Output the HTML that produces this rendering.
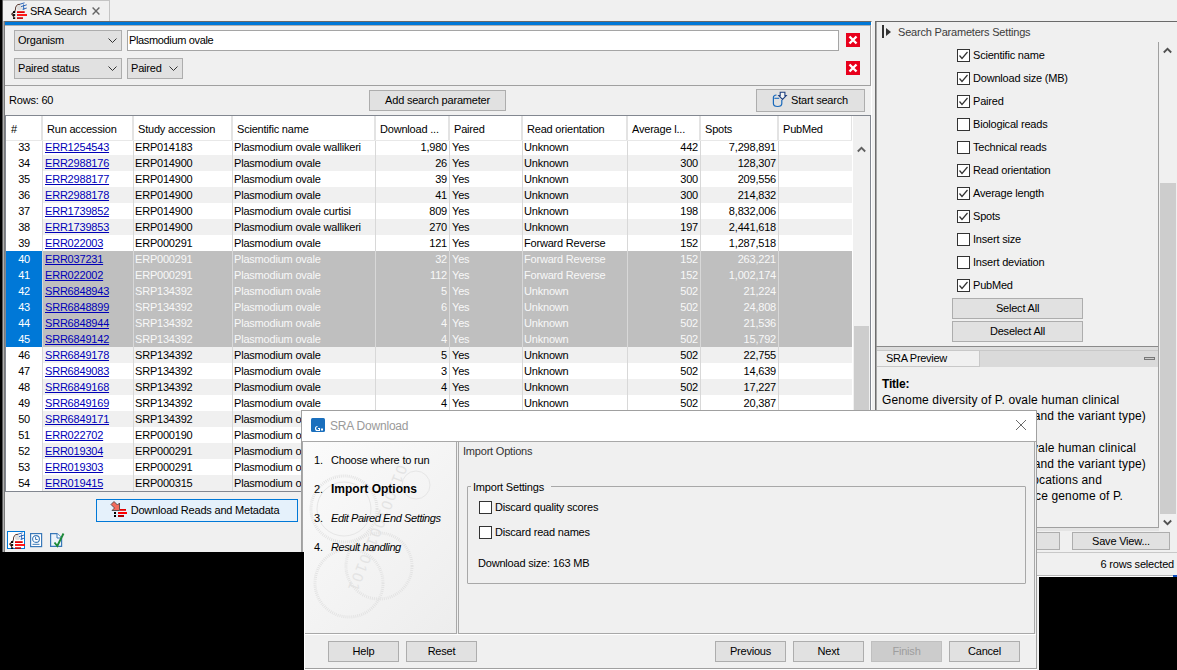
<!DOCTYPE html>
<html><head><meta charset="utf-8"><title>SRA Search</title>
<style>
*{margin:0;padding:0;box-sizing:border-box}
html,body{width:1177px;height:670px;overflow:hidden;background:#f0f0f0}
body{position:relative;font-family:"Liberation Sans",sans-serif;font-size:11px;color:#000}
.a{position:absolute}
.t{position:absolute;white-space:nowrap;line-height:16px;font-size:11px;letter-spacing:-0.2px}
.btn{letter-spacing:-0.2px}
.btn{position:absolute;background:#e1e1e1;border:1px solid #adadad;text-align:center;line-height:18px;white-space:nowrap}
.cb{position:absolute;width:13px;height:13px;border:1px solid #333;background:#fff}
.row{position:absolute;left:6px;width:846px;height:16px}
.lnk{color:#0000b8;text-decoration:underline}
.r{text-align:right}
</style></head><body>

<div class="a" style="left:0;top:0;width:2px;height:670px;background:#000"></div>
<div class="a" style="left:2px;top:0;width:1px;height:670px;background:#5a5a5a"></div>
<div class="a" style="left:3px;top:21px;width:1px;height:531px;background:#b0b0b0"></div>
<div class="a" style="left:3px;top:0;width:107px;height:21px;background:#f0f0f0;border-top:1px solid #c4c4c4;border-right:1px solid #c4c4c4"></div>
<svg class="a" style="left:10px;top:2px" width="18" height="18" viewBox="0 0 18 18">
<circle cx="9.5" cy="5.5" r="2.6" fill="#dedede"/>
<path d="M5.3 8.6 Q5 4.5 7.5 2.6 L10 2.3" stroke="#5a3a30" stroke-width="1" fill="none"/>
<path d="M5.3 8.6 L1.8 12 L4 15" stroke="#4a2a20" stroke-width="1.2" fill="none"/>
<rect x="3" y="9.2" width="2.2" height="1.8" fill="#000"/><rect x="3" y="12.1" width="2.2" height="1.8" fill="#000"/><rect x="3" y="15.3" width="2.2" height="1.6" fill="#000"/>
<path d="M10 2.2 L14.5 0.8 M11 4.6 L16.8 2.8 M12.5 7.2 L16.8 6 M13.5 2.5 L13.8 8" stroke="#3068b8" stroke-width="1" fill="none"/>
<rect x="7" y="9.2" width="7.7" height="1.8" fill="#e00000"/><rect x="7" y="12.1" width="10" height="1.8" fill="#ff0000"/><rect x="7" y="15.3" width="6" height="1.6" fill="#c00000"/>
</svg>
<div class="t" style="left:30px;top:3px;font-size:11px;letter-spacing:-0.35px;color:#000">SRA Search</div>
<svg class="a" style="left:92px;top:7px" width="8" height="8" viewBox="0 0 8 8"><path d="M0.6 0.6 L7.4 7.4 M7.4 0.6 L0.6 7.4" stroke="#666" stroke-width="1.4"/></svg>
<div class="a" style="left:4px;top:21px;width:868px;height:532px;border-left:1px solid #7a7a7a;border-top:1px solid #6a6a6a;border-right:1px solid #ffffff"></div>
<div class="a" style="left:5px;top:22px;width:866px;height:3px;background:#0078d7"></div>
<div class="a" style="left:5px;top:25px;width:866px;height:1px;background:#b0b0b0"></div>
<div class="a" style="left:5px;top:85px;width:866px;height:1px;background:#a0a0a0"></div>
<div class="a" style="left:870px;top:25px;width:1px;height:61px;background:#a0a0a0"></div>
<div class="a" style="left:14px;top:30px;width:108px;height:21px;background:#e1e1e1;border:1px solid #adadad"></div>
<div class="t" style="left:18px;top:32px">Organism</div>
<svg class="a" style="left:108px;top:38px" width="9" height="6" viewBox="0 0 9 6"><path d="M0.5 0.5 L4.5 4.5 L8.5 0.5" stroke="#333" stroke-width="1" fill="none"/></svg>
<div class="a" style="left:127px;top:30px;width:712px;height:21px;background:#fff;border:1px solid #a5a5a5"></div>
<div class="t" style="left:129px;top:32px;letter-spacing:-0.35px">Plasmodium ovale</div>
<div class="a" style="left:14px;top:58px;width:108px;height:21px;background:#e1e1e1;border:1px solid #adadad"></div>
<div class="t" style="left:18px;top:60px">Paired status</div>
<svg class="a" style="left:108px;top:66px" width="9" height="6" viewBox="0 0 9 6"><path d="M0.5 0.5 L4.5 4.5 L8.5 0.5" stroke="#333" stroke-width="1" fill="none"/></svg>
<div class="a" style="left:127px;top:58px;width:56px;height:21px;background:#e1e1e1;border:1px solid #adadad"></div>
<div class="t" style="left:131px;top:60px">Paired</div>
<svg class="a" style="left:169px;top:66px" width="9" height="6" viewBox="0 0 9 6"><path d="M0.5 0.5 L4.5 4.5 L8.5 0.5" stroke="#333" stroke-width="1" fill="none"/></svg>
<svg class="a" style="left:846px;top:33px" width="14" height="14" viewBox="0 0 14 14"><rect width="14" height="14" fill="#e8001c"/><path d="M3.5 3.5 L10.5 10.5 M10.5 3.5 L3.5 10.5" stroke="#fff" stroke-width="2.4"/></svg>
<svg class="a" style="left:846px;top:61px" width="14" height="14" viewBox="0 0 14 14"><rect width="14" height="14" fill="#e8001c"/><path d="M3.5 3.5 L10.5 10.5 M10.5 3.5 L3.5 10.5" stroke="#fff" stroke-width="2.4"/></svg>
<div class="t" style="left:9px;top:92px">Rows: 60</div>
<div class="btn" style="left:369px;top:90px;width:137px;height:21px">Add search parameter</div>
<div class="btn" style="left:756px;top:89px;width:109px;height:23px;line-height:20px;padding-left:18px">Start search</div>
<svg class="a" style="left:771px;top:90px" width="18" height="18" viewBox="0 0 18 18">
<path d="M5.5 5 Q2.4 5.2 2.4 7.5 L2.4 13.5 Q2.4 16.5 6.6 16.5 Q10.8 16.5 10.8 13.5 L10.8 10" fill="none" stroke="#1a6abc" stroke-width="1.2"/>
<path d="M3.3 8.3 L8.2 8.3" stroke="#1a6abc" stroke-width="1.1"/>
<path d="M9.2 2.3 L13.9 2.3 L13.9 5.6 L15.2 5.6 L11.5 9.4 L7.8 5.6 L9.2 5.6 Z" fill="#f4f4f4" stroke="#1d3f7f" stroke-width="1.1"/>
</svg>
<div class="a" style="left:5px;top:115px;width:866px;height:377px;background:#fff;border:1px solid #828790"></div>
<div class="a" style="left:6px;top:116px;width:846px;height:25px;background:#fff;border-bottom:1px solid #e8e8e8"></div>
<div class="t" style="left:11px;top:121px">#</div>
<div class="t" style="left:47px;top:121px">Run accession</div>
<div class="t" style="left:138px;top:121px">Study accession</div>
<div class="t" style="left:237px;top:121px">Scientific name</div>
<div class="t" style="left:380px;top:121px">Download ...</div>
<div class="t" style="left:454px;top:121px">Paired</div>
<div class="t" style="left:527px;top:121px">Read orientation</div>
<div class="t" style="left:632px;top:121px">Average l...</div>
<div class="t" style="left:705px;top:121px">Spots</div>
<div class="t" style="left:783px;top:121px">PubMed</div>
<div class="a" style="left:41px;top:116px;width:2px;height:24px;background:#e3e3e3"></div>
<div class="a" style="left:132px;top:116px;width:2px;height:24px;background:#e3e3e3"></div>
<div class="a" style="left:231px;top:116px;width:2px;height:24px;background:#e3e3e3"></div>
<div class="a" style="left:374px;top:116px;width:2px;height:24px;background:#e3e3e3"></div>
<div class="a" style="left:448px;top:116px;width:2px;height:24px;background:#e3e3e3"></div>
<div class="a" style="left:521px;top:116px;width:2px;height:24px;background:#e3e3e3"></div>
<div class="a" style="left:626px;top:116px;width:2px;height:24px;background:#e3e3e3"></div>
<div class="a" style="left:699px;top:116px;width:2px;height:24px;background:#e3e3e3"></div>
<div class="a" style="left:777px;top:116px;width:2px;height:24px;background:#e3e3e3"></div>
<div class="a" style="left:851px;top:116px;width:2px;height:24px;background:#e3e3e3"></div>
<div class="row" style="top:141px;height:14px;background:#ffffff"></div>
<div class="a" style="left:6px;top:141px;width:36px;height:14px;background:#fff"></div>
<div class="t r" style="left:6px;width:24px;top:139px;color:#000">33</div>
<div class="t lnk" style="left:45px;top:139px">ERR1254543</div>
<div class="t" style="left:135px;top:139px;color:#000">ERP014183</div>
<div class="t" style="left:234px;top:139px;color:#000">Plasmodium ovale wallikeri</div>
<div class="t r" style="left:375px;width:72px;top:139px;color:#000">1,980</div>
<div class="t" style="left:452px;top:139px;color:#000">Yes</div>
<div class="t" style="left:524px;top:139px;color:#000">Unknown</div>
<div class="t r" style="left:627px;width:71px;top:139px;color:#000">442</div>
<div class="t r" style="left:700px;width:76px;top:139px;color:#000">7,298,891</div>
<div class="row" style="top:155px;background:#f0f0f0"></div>
<div class="a" style="left:6px;top:155px;width:36px;height:16px;background:#fff"></div>
<div class="t r" style="left:6px;width:24px;top:155px;color:#000">34</div>
<div class="t lnk" style="left:45px;top:155px">ERR2988176</div>
<div class="t" style="left:135px;top:155px;color:#000">ERP014900</div>
<div class="t" style="left:234px;top:155px;color:#000">Plasmodium ovale</div>
<div class="t r" style="left:375px;width:72px;top:155px;color:#000">26</div>
<div class="t" style="left:452px;top:155px;color:#000">Yes</div>
<div class="t" style="left:524px;top:155px;color:#000">Unknown</div>
<div class="t r" style="left:627px;width:71px;top:155px;color:#000">300</div>
<div class="t r" style="left:700px;width:76px;top:155px;color:#000">128,307</div>
<div class="row" style="top:171px;background:#ffffff"></div>
<div class="a" style="left:6px;top:171px;width:36px;height:16px;background:#fff"></div>
<div class="t r" style="left:6px;width:24px;top:171px;color:#000">35</div>
<div class="t lnk" style="left:45px;top:171px">ERR2988177</div>
<div class="t" style="left:135px;top:171px;color:#000">ERP014900</div>
<div class="t" style="left:234px;top:171px;color:#000">Plasmodium ovale</div>
<div class="t r" style="left:375px;width:72px;top:171px;color:#000">39</div>
<div class="t" style="left:452px;top:171px;color:#000">Yes</div>
<div class="t" style="left:524px;top:171px;color:#000">Unknown</div>
<div class="t r" style="left:627px;width:71px;top:171px;color:#000">300</div>
<div class="t r" style="left:700px;width:76px;top:171px;color:#000">209,556</div>
<div class="row" style="top:187px;background:#f0f0f0"></div>
<div class="a" style="left:6px;top:187px;width:36px;height:16px;background:#fff"></div>
<div class="t r" style="left:6px;width:24px;top:187px;color:#000">36</div>
<div class="t lnk" style="left:45px;top:187px">ERR2988178</div>
<div class="t" style="left:135px;top:187px;color:#000">ERP014900</div>
<div class="t" style="left:234px;top:187px;color:#000">Plasmodium ovale</div>
<div class="t r" style="left:375px;width:72px;top:187px;color:#000">41</div>
<div class="t" style="left:452px;top:187px;color:#000">Yes</div>
<div class="t" style="left:524px;top:187px;color:#000">Unknown</div>
<div class="t r" style="left:627px;width:71px;top:187px;color:#000">300</div>
<div class="t r" style="left:700px;width:76px;top:187px;color:#000">214,832</div>
<div class="row" style="top:203px;background:#ffffff"></div>
<div class="a" style="left:6px;top:203px;width:36px;height:16px;background:#fff"></div>
<div class="t r" style="left:6px;width:24px;top:203px;color:#000">37</div>
<div class="t lnk" style="left:45px;top:203px">ERR1739852</div>
<div class="t" style="left:135px;top:203px;color:#000">ERP014900</div>
<div class="t" style="left:234px;top:203px;color:#000">Plasmodium ovale curtisi</div>
<div class="t r" style="left:375px;width:72px;top:203px;color:#000">809</div>
<div class="t" style="left:452px;top:203px;color:#000">Yes</div>
<div class="t" style="left:524px;top:203px;color:#000">Unknown</div>
<div class="t r" style="left:627px;width:71px;top:203px;color:#000">198</div>
<div class="t r" style="left:700px;width:76px;top:203px;color:#000">8,832,006</div>
<div class="row" style="top:219px;background:#f0f0f0"></div>
<div class="a" style="left:6px;top:219px;width:36px;height:16px;background:#fff"></div>
<div class="t r" style="left:6px;width:24px;top:219px;color:#000">38</div>
<div class="t lnk" style="left:45px;top:219px">ERR1739853</div>
<div class="t" style="left:135px;top:219px;color:#000">ERP014900</div>
<div class="t" style="left:234px;top:219px;color:#000">Plasmodium ovale wallikeri</div>
<div class="t r" style="left:375px;width:72px;top:219px;color:#000">270</div>
<div class="t" style="left:452px;top:219px;color:#000">Yes</div>
<div class="t" style="left:524px;top:219px;color:#000">Unknown</div>
<div class="t r" style="left:627px;width:71px;top:219px;color:#000">197</div>
<div class="t r" style="left:700px;width:76px;top:219px;color:#000">2,441,618</div>
<div class="row" style="top:235px;background:#ffffff"></div>
<div class="a" style="left:6px;top:235px;width:36px;height:16px;background:#fff"></div>
<div class="t r" style="left:6px;width:24px;top:235px;color:#000">39</div>
<div class="t lnk" style="left:45px;top:235px">ERR022003</div>
<div class="t" style="left:135px;top:235px;color:#000">ERP000291</div>
<div class="t" style="left:234px;top:235px;color:#000">Plasmodium ovale</div>
<div class="t r" style="left:375px;width:72px;top:235px;color:#000">121</div>
<div class="t" style="left:452px;top:235px;color:#000">Yes</div>
<div class="t" style="left:524px;top:235px;color:#000">Forward Reverse</div>
<div class="t r" style="left:627px;width:71px;top:235px;color:#000">152</div>
<div class="t r" style="left:700px;width:76px;top:235px;color:#000">1,287,518</div>
<div class="row" style="top:251px;background:#bfbfbf"></div>
<div class="a" style="left:6px;top:251px;width:36px;height:16px;background:#0078d7"></div>
<div class="t r" style="left:6px;width:24px;top:251px;color:#fff">40</div>
<div class="t lnk" style="left:45px;top:251px">ERR037231</div>
<div class="t" style="left:135px;top:251px;color:#f8f8f8">ERP000291</div>
<div class="t" style="left:234px;top:251px;color:#f8f8f8">Plasmodium ovale</div>
<div class="t r" style="left:375px;width:72px;top:251px;color:#f8f8f8">32</div>
<div class="t" style="left:452px;top:251px;color:#f8f8f8">Yes</div>
<div class="t" style="left:524px;top:251px;color:#f8f8f8">Forward Reverse</div>
<div class="t r" style="left:627px;width:71px;top:251px;color:#f8f8f8">152</div>
<div class="t r" style="left:700px;width:76px;top:251px;color:#f8f8f8">263,221</div>
<div class="row" style="top:267px;background:#bfbfbf"></div>
<div class="a" style="left:6px;top:267px;width:36px;height:16px;background:#0078d7"></div>
<div class="t r" style="left:6px;width:24px;top:267px;color:#fff">41</div>
<div class="t lnk" style="left:45px;top:267px">ERR022002</div>
<div class="t" style="left:135px;top:267px;color:#f8f8f8">ERP000291</div>
<div class="t" style="left:234px;top:267px;color:#f8f8f8">Plasmodium ovale</div>
<div class="t r" style="left:375px;width:72px;top:267px;color:#f8f8f8">112</div>
<div class="t" style="left:452px;top:267px;color:#f8f8f8">Yes</div>
<div class="t" style="left:524px;top:267px;color:#f8f8f8">Forward Reverse</div>
<div class="t r" style="left:627px;width:71px;top:267px;color:#f8f8f8">152</div>
<div class="t r" style="left:700px;width:76px;top:267px;color:#f8f8f8">1,002,174</div>
<div class="row" style="top:283px;background:#bfbfbf"></div>
<div class="a" style="left:6px;top:283px;width:36px;height:16px;background:#0078d7"></div>
<div class="t r" style="left:6px;width:24px;top:283px;color:#fff">42</div>
<div class="t lnk" style="left:45px;top:283px">SRR6848943</div>
<div class="t" style="left:135px;top:283px;color:#f8f8f8">SRP134392</div>
<div class="t" style="left:234px;top:283px;color:#f8f8f8">Plasmodium ovale</div>
<div class="t r" style="left:375px;width:72px;top:283px;color:#f8f8f8">5</div>
<div class="t" style="left:452px;top:283px;color:#f8f8f8">Yes</div>
<div class="t" style="left:524px;top:283px;color:#f8f8f8">Unknown</div>
<div class="t r" style="left:627px;width:71px;top:283px;color:#f8f8f8">502</div>
<div class="t r" style="left:700px;width:76px;top:283px;color:#f8f8f8">21,224</div>
<div class="row" style="top:299px;background:#bfbfbf"></div>
<div class="a" style="left:6px;top:299px;width:36px;height:16px;background:#0078d7"></div>
<div class="t r" style="left:6px;width:24px;top:299px;color:#fff">43</div>
<div class="t lnk" style="left:45px;top:299px">SRR6848899</div>
<div class="t" style="left:135px;top:299px;color:#f8f8f8">SRP134392</div>
<div class="t" style="left:234px;top:299px;color:#f8f8f8">Plasmodium ovale</div>
<div class="t r" style="left:375px;width:72px;top:299px;color:#f8f8f8">6</div>
<div class="t" style="left:452px;top:299px;color:#f8f8f8">Yes</div>
<div class="t" style="left:524px;top:299px;color:#f8f8f8">Unknown</div>
<div class="t r" style="left:627px;width:71px;top:299px;color:#f8f8f8">502</div>
<div class="t r" style="left:700px;width:76px;top:299px;color:#f8f8f8">24,808</div>
<div class="row" style="top:315px;background:#bfbfbf"></div>
<div class="a" style="left:6px;top:315px;width:36px;height:16px;background:#0078d7"></div>
<div class="t r" style="left:6px;width:24px;top:315px;color:#fff">44</div>
<div class="t lnk" style="left:45px;top:315px">SRR6848944</div>
<div class="t" style="left:135px;top:315px;color:#f8f8f8">SRP134392</div>
<div class="t" style="left:234px;top:315px;color:#f8f8f8">Plasmodium ovale</div>
<div class="t r" style="left:375px;width:72px;top:315px;color:#f8f8f8">4</div>
<div class="t" style="left:452px;top:315px;color:#f8f8f8">Yes</div>
<div class="t" style="left:524px;top:315px;color:#f8f8f8">Unknown</div>
<div class="t r" style="left:627px;width:71px;top:315px;color:#f8f8f8">502</div>
<div class="t r" style="left:700px;width:76px;top:315px;color:#f8f8f8">21,536</div>
<div class="row" style="top:331px;background:#bfbfbf"></div>
<div class="a" style="left:6px;top:331px;width:36px;height:16px;background:#0078d7"></div>
<div class="t r" style="left:6px;width:24px;top:331px;color:#fff">45</div>
<div class="t lnk" style="left:45px;top:331px">SRR6849142</div>
<div class="t" style="left:135px;top:331px;color:#f8f8f8">SRP134392</div>
<div class="t" style="left:234px;top:331px;color:#f8f8f8">Plasmodium ovale</div>
<div class="t r" style="left:375px;width:72px;top:331px;color:#f8f8f8">4</div>
<div class="t" style="left:452px;top:331px;color:#f8f8f8">Yes</div>
<div class="t" style="left:524px;top:331px;color:#f8f8f8">Unknown</div>
<div class="t r" style="left:627px;width:71px;top:331px;color:#f8f8f8">502</div>
<div class="t r" style="left:700px;width:76px;top:331px;color:#f8f8f8">15,792</div>
<div class="row" style="top:347px;background:#f0f0f0"></div>
<div class="a" style="left:6px;top:347px;width:36px;height:16px;background:#fff"></div>
<div class="t r" style="left:6px;width:24px;top:347px;color:#000">46</div>
<div class="t lnk" style="left:45px;top:347px">SRR6849178</div>
<div class="t" style="left:135px;top:347px;color:#000">SRP134392</div>
<div class="t" style="left:234px;top:347px;color:#000">Plasmodium ovale</div>
<div class="t r" style="left:375px;width:72px;top:347px;color:#000">5</div>
<div class="t" style="left:452px;top:347px;color:#000">Yes</div>
<div class="t" style="left:524px;top:347px;color:#000">Unknown</div>
<div class="t r" style="left:627px;width:71px;top:347px;color:#000">502</div>
<div class="t r" style="left:700px;width:76px;top:347px;color:#000">22,755</div>
<div class="row" style="top:363px;background:#ffffff"></div>
<div class="a" style="left:6px;top:363px;width:36px;height:16px;background:#fff"></div>
<div class="t r" style="left:6px;width:24px;top:363px;color:#000">47</div>
<div class="t lnk" style="left:45px;top:363px">SRR6849083</div>
<div class="t" style="left:135px;top:363px;color:#000">SRP134392</div>
<div class="t" style="left:234px;top:363px;color:#000">Plasmodium ovale</div>
<div class="t r" style="left:375px;width:72px;top:363px;color:#000">3</div>
<div class="t" style="left:452px;top:363px;color:#000">Yes</div>
<div class="t" style="left:524px;top:363px;color:#000">Unknown</div>
<div class="t r" style="left:627px;width:71px;top:363px;color:#000">502</div>
<div class="t r" style="left:700px;width:76px;top:363px;color:#000">14,639</div>
<div class="row" style="top:379px;background:#f0f0f0"></div>
<div class="a" style="left:6px;top:379px;width:36px;height:16px;background:#fff"></div>
<div class="t r" style="left:6px;width:24px;top:379px;color:#000">48</div>
<div class="t lnk" style="left:45px;top:379px">SRR6849168</div>
<div class="t" style="left:135px;top:379px;color:#000">SRP134392</div>
<div class="t" style="left:234px;top:379px;color:#000">Plasmodium ovale</div>
<div class="t r" style="left:375px;width:72px;top:379px;color:#000">4</div>
<div class="t" style="left:452px;top:379px;color:#000">Yes</div>
<div class="t" style="left:524px;top:379px;color:#000">Unknown</div>
<div class="t r" style="left:627px;width:71px;top:379px;color:#000">502</div>
<div class="t r" style="left:700px;width:76px;top:379px;color:#000">17,227</div>
<div class="row" style="top:395px;background:#ffffff"></div>
<div class="a" style="left:6px;top:395px;width:36px;height:16px;background:#fff"></div>
<div class="t r" style="left:6px;width:24px;top:395px;color:#000">49</div>
<div class="t lnk" style="left:45px;top:395px">SRR6849169</div>
<div class="t" style="left:135px;top:395px;color:#000">SRP134392</div>
<div class="t" style="left:234px;top:395px;color:#000">Plasmodium ovale</div>
<div class="t r" style="left:375px;width:72px;top:395px;color:#000">4</div>
<div class="t" style="left:452px;top:395px;color:#000">Yes</div>
<div class="t" style="left:524px;top:395px;color:#000">Unknown</div>
<div class="t r" style="left:627px;width:71px;top:395px;color:#000">502</div>
<div class="t r" style="left:700px;width:76px;top:395px;color:#000">20,387</div>
<div class="row" style="top:411px;background:#f0f0f0"></div>
<div class="a" style="left:6px;top:411px;width:36px;height:16px;background:#fff"></div>
<div class="t r" style="left:6px;width:24px;top:411px;color:#000">50</div>
<div class="t lnk" style="left:45px;top:411px">SRR6849171</div>
<div class="t" style="left:135px;top:411px;color:#000">SRP134392</div>
<div class="t" style="left:234px;top:411px;color:#000">Plasmodium ovale</div>
<div class="t r" style="left:375px;width:72px;top:411px;color:#000">4</div>
<div class="t" style="left:452px;top:411px;color:#000">Yes</div>
<div class="t" style="left:524px;top:411px;color:#000">Unknown</div>
<div class="t r" style="left:627px;width:71px;top:411px;color:#000">502</div>
<div class="t r" style="left:700px;width:76px;top:411px;color:#000">20,000</div>
<div class="row" style="top:427px;background:#ffffff"></div>
<div class="a" style="left:6px;top:427px;width:36px;height:16px;background:#fff"></div>
<div class="t r" style="left:6px;width:24px;top:427px;color:#000">51</div>
<div class="t lnk" style="left:45px;top:427px">ERR022702</div>
<div class="t" style="left:135px;top:427px;color:#000">ERP000190</div>
<div class="t" style="left:234px;top:427px;color:#000">Plasmodium ovale</div>
<div class="t r" style="left:375px;width:72px;top:427px;color:#000">4</div>
<div class="t" style="left:452px;top:427px;color:#000">Yes</div>
<div class="t" style="left:524px;top:427px;color:#000">Unknown</div>
<div class="t r" style="left:627px;width:71px;top:427px;color:#000">502</div>
<div class="t r" style="left:700px;width:76px;top:427px;color:#000">20,000</div>
<div class="row" style="top:443px;background:#f0f0f0"></div>
<div class="a" style="left:6px;top:443px;width:36px;height:16px;background:#fff"></div>
<div class="t r" style="left:6px;width:24px;top:443px;color:#000">52</div>
<div class="t lnk" style="left:45px;top:443px">ERR019304</div>
<div class="t" style="left:135px;top:443px;color:#000">ERP000291</div>
<div class="t" style="left:234px;top:443px;color:#000">Plasmodium ovale</div>
<div class="t r" style="left:375px;width:72px;top:443px;color:#000">4</div>
<div class="t" style="left:452px;top:443px;color:#000">Yes</div>
<div class="t" style="left:524px;top:443px;color:#000">Unknown</div>
<div class="t r" style="left:627px;width:71px;top:443px;color:#000">502</div>
<div class="t r" style="left:700px;width:76px;top:443px;color:#000">20,000</div>
<div class="row" style="top:459px;background:#ffffff"></div>
<div class="a" style="left:6px;top:459px;width:36px;height:16px;background:#fff"></div>
<div class="t r" style="left:6px;width:24px;top:459px;color:#000">53</div>
<div class="t lnk" style="left:45px;top:459px">ERR019303</div>
<div class="t" style="left:135px;top:459px;color:#000">ERP000291</div>
<div class="t" style="left:234px;top:459px;color:#000">Plasmodium ovale</div>
<div class="t r" style="left:375px;width:72px;top:459px;color:#000">4</div>
<div class="t" style="left:452px;top:459px;color:#000">Yes</div>
<div class="t" style="left:524px;top:459px;color:#000">Unknown</div>
<div class="t r" style="left:627px;width:71px;top:459px;color:#000">502</div>
<div class="t r" style="left:700px;width:76px;top:459px;color:#000">20,000</div>
<div class="row" style="top:475px;background:#f0f0f0"></div>
<div class="a" style="left:6px;top:475px;width:36px;height:16px;background:#fff"></div>
<div class="t r" style="left:6px;width:24px;top:475px;color:#000">54</div>
<div class="t lnk" style="left:45px;top:475px">ERR019415</div>
<div class="t" style="left:135px;top:475px;color:#000">ERP000315</div>
<div class="t" style="left:234px;top:475px;color:#000">Plasmodium ovale</div>
<div class="t r" style="left:375px;width:72px;top:475px;color:#000">4</div>
<div class="t" style="left:452px;top:475px;color:#000">Yes</div>
<div class="t" style="left:524px;top:475px;color:#000">Unknown</div>
<div class="t r" style="left:627px;width:71px;top:475px;color:#000">502</div>
<div class="t r" style="left:700px;width:76px;top:475px;color:#000">20,000</div>
<div class="a" style="left:42px;top:141px;width:1px;height:350px;background:#d8d8d8"></div>
<div class="a" style="left:133px;top:141px;width:1px;height:350px;background:#d8d8d8"></div>
<div class="a" style="left:232px;top:141px;width:1px;height:350px;background:#d8d8d8"></div>
<div class="a" style="left:375px;top:141px;width:1px;height:350px;background:#d8d8d8"></div>
<div class="a" style="left:449px;top:141px;width:1px;height:350px;background:#d8d8d8"></div>
<div class="a" style="left:522px;top:141px;width:1px;height:350px;background:#d8d8d8"></div>
<div class="a" style="left:627px;top:141px;width:1px;height:350px;background:#d8d8d8"></div>
<div class="a" style="left:700px;top:141px;width:1px;height:350px;background:#d8d8d8"></div>
<div class="a" style="left:778px;top:141px;width:1px;height:350px;background:#d8d8d8"></div>
<div class="a" style="left:852px;top:141px;width:1px;height:350px;background:#d8d8d8"></div>
<div class="a" style="left:852px;top:116px;width:18px;height:375px;background:#f0f0f0;border-left:1px solid #fff"></div>
<svg class="a" style="left:857px;top:146px" width="9" height="7" viewBox="0 0 9 7"><path d="M0.8 5.5 L4.5 1.8 L8.2 5.5" stroke="#606060" stroke-width="1.8" fill="none"/></svg>
<div class="a" style="left:854px;top:326px;width:15px;height:165px;background:#cdcdcd"></div>
<div class="btn" style="left:96px;top:499px;width:202px;height:23px;background:#e5f1fb;border-color:#0078d7;line-height:20px;padding-left:16px">Download Reads and Metadata</div>
<svg class="a" style="left:108px;top:500px" width="22" height="20" viewBox="0 0 22 20">
<path d="M11.5 3 L11.5 10.5 L4 10.5 L6.5 8 L3 4.5 L6 1.5 L9.5 5 Z" fill="#f26b5b" stroke="#3a3a3a" stroke-width="0.8" stroke-linejoin="miter"/>
<rect x="12" y="9" width="6" height="1.8" fill="#e00000"/><rect x="10" y="12" width="9" height="2" fill="#ff0000"/><rect x="10" y="15" width="6" height="2" fill="#b00000"/>
<rect x="6" y="12" width="2" height="2" fill="#000"/><rect x="6" y="15" width="2" height="2" fill="#000"/>
</svg>
<div class="a" style="left:7px;top:531px;width:18px;height:18px;border:1px solid #0078d7;background:#fff"></div>
<svg class="a" style="left:8px;top:532px" width="18" height="18" viewBox="0 0 18 18">
<circle cx="9.5" cy="5.5" r="2.6" fill="#dedede"/>
<path d="M5.3 8.6 Q5 4.5 7.5 2.6 L10 2.3" stroke="#5a3a30" stroke-width="1" fill="none"/>
<path d="M5.3 8.6 L1.8 12 L4 15" stroke="#4a2a20" stroke-width="1.2" fill="none"/>
<rect x="3" y="9.2" width="2.2" height="1.8" fill="#000"/><rect x="3" y="12.1" width="2.2" height="1.8" fill="#000"/><rect x="3" y="15.3" width="2.2" height="1.6" fill="#000"/>
<path d="M10 2.2 L14.5 0.8 M11 4.6 L16.8 2.8 M12.5 7.2 L16.8 6 M13.5 2.5 L13.8 8" stroke="#3068b8" stroke-width="1" fill="none"/>
<rect x="7" y="9.2" width="7.7" height="1.8" fill="#e00000"/><rect x="7" y="12.1" width="10" height="1.8" fill="#ff0000"/><rect x="7" y="15.3" width="6" height="1.6" fill="#c00000"/>
</svg>
<svg class="a" style="left:29px;top:532px" width="14" height="16" viewBox="0 0 14 16">
<rect x="1.6" y="1.6" width="11" height="13" fill="#fff" stroke="#3a78b8" stroke-width="1.2"/>
<circle cx="7" cy="7" r="3.4" fill="none" stroke="#3a78b8" stroke-width="1.1"/>
<path d="M6.6 5 L6.6 7.5 L8.6 7.5" stroke="#3a78b8" stroke-width="1" fill="none"/>
<path d="M3.5 12.3 L10.5 12.3" stroke="#3a78b8" stroke-width="1"/>
</svg>
<svg class="a" style="left:49px;top:532px" width="17" height="16" viewBox="0 0 17 16">
<path d="M1.6 1.6 L8 1.6 L12.6 6 L12.6 14.4 L1.6 14.4 Z" fill="#eef4fb" stroke="#3a78b8" stroke-width="1.2"/>
<path d="M8 1.6 L8 6 L12.6 6" fill="#fff" stroke="#3a78b8" stroke-width="1"/>
<path d="M5.5 10.5 L8.3 14 L14.5 1.5" stroke="#1e8a38" stroke-width="1.9" fill="none"/>
</svg>
<div class="a" style="left:0;top:552px;width:303px;height:118px;background:#000"></div>
<div class="a" style="left:875px;top:21px;width:302px;height:532px;border-top:1px solid #6a6a6a;border-left:1px solid #6d6d6d"></div>
<div class="a" style="left:876px;top:22px;width:1px;height:530px;background:#a8a8a8"></div>
<div class="a" style="left:882px;top:25px;width:2px;height:13px;background:#333"></div>
<svg class="a" style="left:885px;top:27px" width="7" height="10" viewBox="0 0 7 10"><path d="M1 1 L6 5 L1 9 Z" fill="#333"/></svg>
<div class="t" style="left:898px;top:24px;color:#3c3c3c;font-size:11px">Search Parameters Settings</div>
<div class="cb" style="left:957px;top:49px"></div>
<svg class="a" style="left:957px;top:49px" width="13" height="13" viewBox="0 0 13 13"><path d="M2.5 6.5 L5 9.5 L10.5 3" stroke="#333" stroke-width="1.2" fill="none"/></svg>
<div class="t" style="left:973px;top:47px">Scientific name</div>
<div class="cb" style="left:957px;top:72px"></div>
<svg class="a" style="left:957px;top:72px" width="13" height="13" viewBox="0 0 13 13"><path d="M2.5 6.5 L5 9.5 L10.5 3" stroke="#333" stroke-width="1.2" fill="none"/></svg>
<div class="t" style="left:973px;top:70px">Download size (MB)</div>
<div class="cb" style="left:957px;top:95px"></div>
<svg class="a" style="left:957px;top:95px" width="13" height="13" viewBox="0 0 13 13"><path d="M2.5 6.5 L5 9.5 L10.5 3" stroke="#333" stroke-width="1.2" fill="none"/></svg>
<div class="t" style="left:973px;top:93px">Paired</div>
<div class="cb" style="left:957px;top:118px"></div>
<div class="t" style="left:973px;top:116px">Biological reads</div>
<div class="cb" style="left:957px;top:141px"></div>
<div class="t" style="left:973px;top:139px">Technical reads</div>
<div class="cb" style="left:957px;top:164px"></div>
<svg class="a" style="left:957px;top:164px" width="13" height="13" viewBox="0 0 13 13"><path d="M2.5 6.5 L5 9.5 L10.5 3" stroke="#333" stroke-width="1.2" fill="none"/></svg>
<div class="t" style="left:973px;top:162px">Read orientation</div>
<div class="cb" style="left:957px;top:187px"></div>
<svg class="a" style="left:957px;top:187px" width="13" height="13" viewBox="0 0 13 13"><path d="M2.5 6.5 L5 9.5 L10.5 3" stroke="#333" stroke-width="1.2" fill="none"/></svg>
<div class="t" style="left:973px;top:185px">Average length</div>
<div class="cb" style="left:957px;top:210px"></div>
<svg class="a" style="left:957px;top:210px" width="13" height="13" viewBox="0 0 13 13"><path d="M2.5 6.5 L5 9.5 L10.5 3" stroke="#333" stroke-width="1.2" fill="none"/></svg>
<div class="t" style="left:973px;top:208px">Spots</div>
<div class="cb" style="left:957px;top:233px"></div>
<div class="t" style="left:973px;top:231px">Insert size</div>
<div class="cb" style="left:957px;top:256px"></div>
<div class="t" style="left:973px;top:254px">Insert deviation</div>
<div class="cb" style="left:957px;top:279px"></div>
<svg class="a" style="left:957px;top:279px" width="13" height="13" viewBox="0 0 13 13"><path d="M2.5 6.5 L5 9.5 L10.5 3" stroke="#333" stroke-width="1.2" fill="none"/></svg>
<div class="t" style="left:973px;top:277px">PubMed</div>
<div class="btn" style="left:952px;top:298px;width:131px;height:21px">Select All</div>
<div class="btn" style="left:952px;top:321px;width:131px;height:21px">Deselect All</div>
<div class="a" style="left:1158px;top:42px;width:1px;height:486px;background:#a0a0a0"></div>
<svg class="a" style="left:1163px;top:47px" width="9" height="7" viewBox="0 0 9 7"><path d="M0.8 5.5 L4.5 1.8 L8.2 5.5" stroke="#505050" stroke-width="1.8" fill="none"/></svg>
<div class="a" style="left:1160px;top:183px;width:16px;height:331px;background:#cdcdcd"></div>
<svg class="a" style="left:1163px;top:519px" width="9" height="7" viewBox="0 0 9 7"><path d="M0.8 1.5 L4.5 5.2 L8.2 1.5" stroke="#505050" stroke-width="1.8" fill="none"/></svg>
<div class="a" style="left:876px;top:346px;width:282px;height:1px;background:#8a8a8a"></div>
<div class="a" style="left:877px;top:347px;width:281px;height:4px;background:#dcdcdc;border-bottom:1px solid #c8c8c8"></div>
<div class="a" style="left:877px;top:351px;width:282px;height:177px;border-bottom:1px solid #a0a0a0"></div>
<div class="a" style="left:877px;top:528px;width:282px;height:3px;background:#e4e4e4"></div>
<div class="a" style="left:877px;top:351px;width:281px;height:16px;background:#dadada"></div>
<div class="a" style="left:877px;top:351px;width:103px;height:16px;background:#f0f0f0;border-right:1px solid #c8c8c8;border-bottom:1px solid #c8c8c8"></div>
<div class="t" style="left:886px;top:350px;font-size:11px;letter-spacing:-0.3px;color:#000">SRA Preview</div>
<div class="a" style="left:1144px;top:357px;width:11px;height:3px;border:1px solid #777;background:#ccc"></div>
<div class="t" style="left:882px;top:376px;font-size:12px;font-weight:bold;color:#000">Title:</div>
<div class="t" style="left:882px;top:392px;font-size:12px;letter-spacing:0.14px">Genome diversity of P. ovale human clinical</div>
<div class="a" style="left:877px;top:400px;width:281px;height:120px;overflow:hidden">
<div class="t" style="right:12px;top:8px;font-size:12px;letter-spacing:0.14px">isolates from different regions (and the variant type)</div>
<div class="t" style="right:22px;top:40px;font-size:12px;letter-spacing:0.14px">Whole genome of P. ovale human clinical</div>
<div class="t" style="right:12px;top:56px;font-size:12px;letter-spacing:0.14px">isolates from different regions (and the variant type)</div>
<div class="t" style="right:56px;top:72px;font-size:12px;letter-spacing:0.14px">sampled from various locations and</div>
<div class="t" style="right:35px;top:88px;font-size:12px;letter-spacing:0.14px">compared to the reference genome of P.</div>
</div>
<div class="btn" style="left:1072px;top:532px;width:98px;height:18px;line-height:16px">Save View...</div>
<div class="btn" style="left:970px;top:532px;width:90px;height:18px"></div>
<div class="a" style="left:876px;top:552px;width:301px;height:1px;background:#c8c8c8"></div>
<div class="a" style="left:876px;top:575px;width:301px;height:1px;background:#b8b8b8"></div>
<div class="t r" style="left:1000px;width:174px;top:556px">6 rows selected</div>
<div class="a" style="left:1039px;top:577px;width:138px;height:93px;background:#000"></div>
<div class="a" style="left:1037px;top:576px;width:140px;height:1px;background:#fff"></div>
<div class="a" style="left:1173px;top:575px;width:4px;height:2px;background:#0a4cc0"></div>
<div class="a" style="left:301px;top:410px;width:736px;height:260px;background:#f0f0f0;border:1px solid #a0a0a0;border-bottom:none"></div>
<div class="a" style="left:302px;top:411px;width:734px;height:31px;background:#fff;border-bottom:1px solid #a8a8a8"></div>
<svg class="a" style="left:311px;top:418px" width="14" height="14" viewBox="0 0 14 14"><rect width="14" height="14" rx="1.5" fill="#1a6fbd"/><path d="M6.5 8.5 Q4.5 8.5 4.5 10.5 Q4.5 12.5 6.5 12.5 L8.5 12.5 L8.5 10.5 L7 10.5" fill="none" stroke="#fff" stroke-width="1.1"/><rect x="10" y="10.5" width="2" height="2" fill="#fff"/></svg>
<div class="t" style="left:330px;top:418px;font-size:12px;letter-spacing:-0.2px;color:#9a9a9a">SRA Download</div>
<svg class="a" style="left:1015px;top:419px" width="12" height="12" viewBox="0 0 12 12"><path d="M1 1 L11 11 M11 1 L1 11" stroke="#6a6a6a" stroke-width="1"/></svg>
<div class="a" style="left:302px;top:442px;width:155px;height:192px;background:linear-gradient(135deg,#fbfbfb,#ededed);border-left:1px solid #a8a8a8;border-right:1px solid #a8a8a8;border-bottom:1px solid #a8a8a8"></div>
<div class="a" style="left:303px;top:634px;width:733px;height:1px;background:#fff"></div>
<svg class="a" style="left:303px;top:442px" width="153" height="191" viewBox="0 0 153 191">
<g fill="none" stroke="#e2e2e2" stroke-width="3" stroke-dasharray="0.9 1.1">
<circle cx="41" cy="67" r="33"/><circle cx="46" cy="141" r="34"/><circle cx="76" cy="124" r="33"/>
</g>
<g fill="none" stroke="#e6e6e6" stroke-width="1">
<circle cx="41" cy="67" r="27"/><circle cx="113" cy="43" r="14"/>
</g>
<g font-family="Liberation Sans" font-size="15" fill="#e3e3e3">
<text transform="translate(95,22) rotate(112)" letter-spacing="1.5">01100100110101</text>
</g>
</svg>
<div class="t" style="left:314px;top:452px;font-size:11px">1.</div>
<div class="t" style="left:331px;top:452px;font-size:11px;font-weight:normal;font-style:normal;letter-spacing:-0.2px;">Choose where to run</div>
<div class="t" style="left:314px;top:481px;font-size:11px">2.</div>
<div class="t" style="left:331px;top:481px;font-size:11px;font-weight:bold;font-style:normal;letter-spacing:0px;font-size:12px">Import Options</div>
<div class="t" style="left:314px;top:510px;font-size:11px">3.</div>
<div class="t" style="left:331px;top:510px;font-size:11px;font-weight:normal;font-style:italic;letter-spacing:-0.4px;">Edit Paired End Settings</div>
<div class="t" style="left:314px;top:539px;font-size:11px">4.</div>
<div class="t" style="left:331px;top:539px;font-size:11px;font-weight:normal;font-style:italic;letter-spacing:-0.4px;">Result handling</div>
<div class="a" style="left:458px;top:442px;width:577px;height:192px;border-left:1px solid #a8a8a8;border-right:1px solid #a8a8a8;border-bottom:1px solid #a8a8a8"></div>
<div class="t" style="left:463px;top:443px;color:#333">Import Options</div>
<div class="a" style="left:467px;top:486px;width:559px;height:98px;border:1px solid #a8a8a8;border-radius:1px"></div>
<div class="a" style="left:471px;top:480px;width:80px;height:12px;background:#f0f0f0"></div>
<div class="t" style="left:473px;top:479px">Import Settings</div>
<div class="cb" style="left:479px;top:501px"></div>
<div class="t" style="left:495px;top:499px">Discard quality scores</div>
<div class="cb" style="left:479px;top:526px"></div>
<div class="t" style="left:495px;top:524px">Discard read names</div>
<div class="t" style="left:478px;top:555px">Download size: 163 MB</div>
<div class="btn" style="left:328px;top:641px;width:71px;height:21px">Help</div>
<div class="btn" style="left:406px;top:641px;width:71px;height:21px">Reset</div>
<div class="btn" style="left:715px;top:641px;width:71px;height:21px">Previous</div>
<div class="btn" style="left:793px;top:641px;width:71px;height:21px">Next</div>
<div class="btn" style="left:949px;top:641px;width:71px;height:21px">Cancel</div>
<div class="btn" style="left:871px;top:641px;width:71px;height:21px;background:#cccccc;border-color:#bfbfbf;color:#9d9d9d">Finish</div>
<div class="a" style="left:301px;top:668px;width:736px;height:1px;background:#a0a0a0"></div>
<div class="a" style="left:301px;top:669px;width:736px;height:1px;background:#fff"></div>
<div class="a" style="left:0;top:552px;width:304px;height:118px;background:#000"></div>
<div class="a" style="left:304px;top:552px;width:1px;height:117px;background:#fff"></div>
</body></html>
